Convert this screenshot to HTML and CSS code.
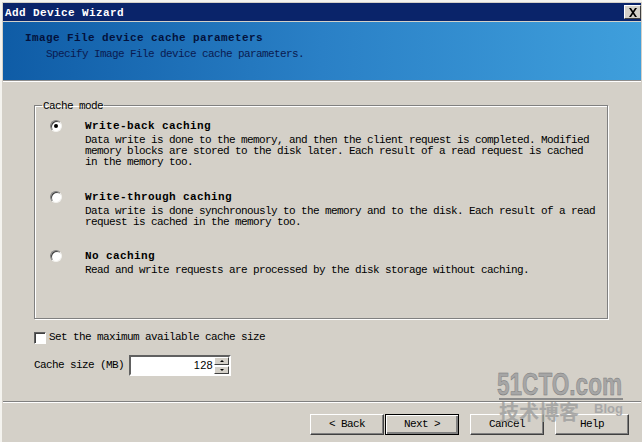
FILE: index.html
```html
<!DOCTYPE html>
<html lang="en">
<head>
<meta charset="utf-8">
<title>Add Device Wizard</title>
<link rel="stylesheet" href="styles.css">
</head>
<body>
<div class="window">
  <div class="titlebar">
    <span class="title-text">Add Device Wizard</span>
    <span class="close"><svg width="10" height="9" viewBox="0 0 10 9"><path d="M1 0h2l2 3 2-3h2L6 4.500 9 9H7L5 6 3 9H1l3-4.500z" fill="#000"/></svg></span>
  </div>
  <header class="banner">
    <div class="banner-title">Image File device cache parameters</div>
    <div class="banner-sub">Specify Image File device cache parameters.</div>
  </header>
  <main class="content">
    <fieldset class="group">
      <legend class="group-label">Cache mode</legend>
      <div class="option opt-1">
        <span class="radio checked"></span>
        <div class="option-body">
          <div class="option-title">Write-back caching</div>
          <p class="option-desc">Data write is done to the memory, and then the client request is completed. Modified<br>memory blocks are stored to the disk later. Each result of a read request is cached<br>in the memory too.</p>
        </div>
      </div>
      <div class="option opt-2">
        <span class="radio"></span>
        <div class="option-body">
          <div class="option-title">Write-through caching</div>
          <p class="option-desc">Data write is done synchronously to the memory and to the disk. Each result of a read<br>request is cached in the memory too.</p>
        </div>
      </div>
      <div class="option opt-3">
        <span class="radio"></span>
        <div class="option-body">
          <div class="option-title">No caching</div>
          <p class="option-desc">Read and write requests are processed by the disk storage without caching.</p>
        </div>
      </div>
    </fieldset>
    <div class="check-row"><span class="checkbox"></span><span>Set the maximum available cache size</span></div>
    <div class="size-row">
      <span>Cache size (MB)</span>
      <div class="spin-input">
        <span class="spin-value">128</span>
        <span class="spin-buttons">
          <span class="spin-btn"><i class="arrow-up"></i></span>
          <span class="spin-btn"><i class="arrow-down"></i></span>
        </span>
      </div>
    </div>
  </main>
  <footer class="footer">
    <div class="btn-pair">
      <span class="btn">&lt; Back</span>
      <span class="btn default">Next &gt;</span>
    </div>
    <span class="btn">Cancel</span>
    <span class="btn">Help</span>
  </footer>
  <div class="watermark">
    <div class="wm-rule">
      <svg class="wm-logo" width="132" height="44" viewBox="0 0 132 44">
        <text class="wm-logo-text" x="4" y="37" textLength="125" lengthAdjust="spacingAndGlyphs">51CTO.com</text>
      </svg>
    </div>
    <div class="wm-sub"><span class="wm-cn">技术博客</span><span class="wm-blog">Blog</span></div>
  </div>
</div>
</body>
</html>
```
FILE: styles.css
```css
* { box-sizing: border-box; }
html, body { margin: 0; padding: 0; }
body { width: 642px; height: 442px; overflow: hidden; background: #d4d0c8; }
.window {
  position: relative;
  width: 642px;
  height: 442px;
  display: flex;
  flex-direction: column;
  background: #d4d0c8;
  padding: 3px 1px 0 3px;
  font: 11px/11px "Liberation Mono", monospace;
  letter-spacing: -0.6px;
  color: #000;
  box-shadow: inset 2px 2px 0 #f4f3ef;
}
.titlebar {
  height: 18px;
  background: #0a246a;
  color: #fff;
  display: flex;
  align-items: center;
  justify-content: space-between;
  padding: 2px 0 0 2px;
  font-weight: 700;
  letter-spacing: 0.4px;
  flex: none;
}
.close {
  width: 17px;
  height: 14px;
  margin-top: -2px;
  background: #d4d0c8;
  border: 1px solid;
  border-color: #fff #404040 #404040 #fff;
  display: flex;
  align-items: center;
  justify-content: center;
}
.banner {
  flex: none;
  height: 59px;
  margin-top: 1px;
  padding: 11px 0 0 22px;
  background: linear-gradient(90deg, #0f5ca6 0%, #2a80c6 50%, #3f9fdc 100%);
  border-bottom: 1px solid #8e8e8e;
  box-shadow: 0 1px 0 #fff;
  color: #0a1a50;
}
.banner-title { font-weight: 700; letter-spacing: 0.4px; color: #03123c; }
.banner-sub { margin: 5px 0 0 21px; }
.content { flex: 1; padding: 19px 0 0 31px; }
.group {
  margin: 0;
  width: 574px;
  height: 219px;
  padding: 0;
  border: 1px solid #808080;
  box-shadow: 1px 1px 0 #fff, inset 1px 1px 0 #fff;
  min-width: 0;
}
.group-label { padding: 2px 1px 0; margin-left: 7px; line-height: 9px; }
.option { display: flex; margin-left: 15px; }
.opt-1 { margin-top: 9px; }
.opt-2 { height: 50px; margin-top: 23px; }
.opt-3 { margin-top: 9px; }
.radio {
  flex: none;
  width: 12px;
  height: 12px;
  border-radius: 50%;
  background: #fff;
  border: 1px solid;
  border-color: #808080 #f2f1ee #f2f1ee #808080;
  box-shadow: inset 1px 1px 0 #404040;
  display: flex;
  align-items: center;
  justify-content: center;
}
.radio.checked::after {
  content: "";
  width: 4px;
  height: 4px;
  border-radius: 50%;
  background: #000;
}
.option-body { margin-left: 23px; }
.option-title { font-weight: 700; letter-spacing: 0.4px; height: 13px; line-height: 13px; }
.option-desc { margin: 2px 0 0; }
.check-row { display: flex; align-items: center; gap: 3px; margin-top: 12px; height: 13px; }
.checkbox {
  width: 12px;
  height: 12px;
  background: #fff;
  border: 1px solid;
  border-color: #606060 #fff #fff #606060;
  box-shadow: inset 1px 1px 0 #404040;
}
.size-row { display: flex; align-items: center; gap: 5px; margin-top: 11px; height: 21px; }
.spin-input {
  width: 102px;
  height: 21px;
  background: #fff;
  border: 2px solid;
  border-color: #606060 #fff #fff #606060;
  display: flex;
  align-items: center;
  justify-content: flex-end;
}
.spin-value { font-family: "Liberation Sans", sans-serif; letter-spacing: 0.3px; font-size: 11px; margin-right: 1px; }
.spin-buttons { display: flex; flex-direction: column; gap: 1px; width: 15px; height: 17px; }
.spin-btn {
  flex: 1;
  background: #d4d0c8;
  border: 1px solid;
  border-color: #fff #404040 #404040 #fff;
  display: flex;
  align-items: center;
  justify-content: center;
}
.arrow-up { border: 2px solid transparent; border-top: 0; border-bottom-color: #000; }
.arrow-down { border: 2px solid transparent; border-bottom: 0; border-top-color: #000; }
.footer {
  flex: none;
  height: 41px;
  border-top: 1px solid #808080;
  box-shadow: inset 0 1px 0 #fff;
  padding: 12px 0 0 307px;
  display: flex;
  gap: 11px;
}
.btn-pair { display: flex; gap: 1px; }
.btn {
  width: 74px;
  height: 21px;
  border: 1px solid;
  border-color: #fff #404040 #404040 #fff;
  box-shadow: inset -1px -1px 0 #808080;
  display: flex;
  align-items: center;
  justify-content: center;
}
.btn.default { outline: 1px solid #000; outline-offset: -1px; border-color: #000; box-shadow: inset 1px 1px 0 #fff, inset -2px -2px 0 #808080; }
.watermark {
  position: absolute;
  left: 499px;
  top: 368px;
  width: 124px;
  pointer-events: none;
  letter-spacing: 0;
  font-family: "Liberation Sans", sans-serif;
}
.wm-rule { display: flow-root; height: 32px; border-bottom: 2px solid #8c8c8c; }
.wm-logo { display: block; margin: -10px 0 0 -6px; }
.wm-logo-text {
  font-size: 32px;
  font-weight: 700;
  fill: #a6a6a6;
  stroke: #777;
  stroke-width: .5px;
  letter-spacing: 0;
}
.wm-sub { display: flex; justify-content: space-between; align-items: flex-start; margin-top: 1px; }
.wm-cn { font: 700 20px/22px "Noto Sans CJK SC", sans-serif; color: #a0a0a0; opacity: .85; }
.wm-blog { font-size: 13px; line-height: 14px; font-weight: 700; color: #a8a8a8; margin: 1px 0 0 0; }
```
